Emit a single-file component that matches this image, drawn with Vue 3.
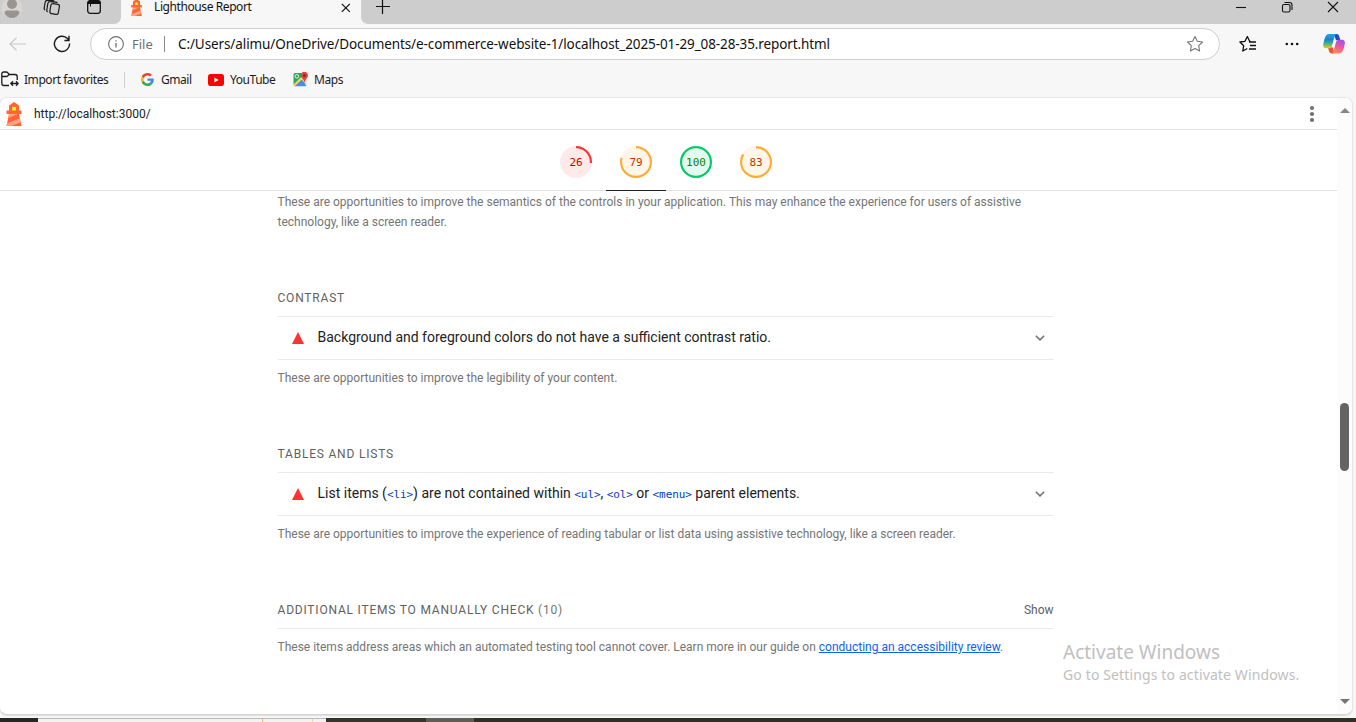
<script setup>
const scores = [
  { value: 26, kind: 'fail' },
  { value: 79, kind: 'average', active: true },
  { value: 100, kind: 'pass' },
  { value: 83, kind: 'average' },
]
const circumference = 2 * Math.PI * 56
const dash = (v) => `${(v / 100) * circumference} ${circumference}`
</script>

<template>
  <div class="browser">
    <div class="tabstrip">
      <div class="tab-left">
        <svg class="avatar" width="22" height="24" viewBox="0 0 22 24">
          <circle cx="12" cy="8" r="10.5" fill="#d8d6d3" />
          <circle cx="12" cy="4" r="5" fill="#989490" />
          <path d="M4.500 13q0-2.500 2.500-2.500h10q2.500 0 2.500 2.500-2 5-7.500 5t-7.500-5z" fill="#989490" />
        </svg>
        <svg class="stack" width="18" height="18" viewBox="0 0 18 18" fill="none" stroke="#1b1b1b" stroke-width="1.200">
          <rect x="7.300" y="4.800" width="8.600" height="10.200" rx="2" transform="rotate(10 11 10)" />
          <path d="M4.600 13q-1-.5-.8-1.900l1-6.500q.4-2 2.400-1.900l5.500.4q1.200.1 1.600.9M2.100 11q-1.100-.7-.9-2l.9-5.500q.4-2.300 2.400-2.200l5.300.3q1 .1 1.500.9" />
        </svg>
        <svg class="workspace" width="16" height="16" viewBox="0 0 16 16">
          <rect x="1.700" y="1.700" width="12.600" height="12.600" rx="2.500" fill="none" stroke="#111" stroke-width="1.300" />
          <path d="M1.500 5V3.500q0-2 2-2h9q2 0 2 2V5z" fill="#111" />
          <path d="M4.500 5v2.500" stroke="#111" />
        </svg>
      </div>
      <div class="tab">
        <svg class="favicon" width="17" height="17" viewBox="0 0 48 48">
          <path d="m14 7 10-7 10 7v10h5v7h-5l5 24H9l5-24H9v-7h5V7Z" fill="#F63" />
          <path d="M31.561 24H14l-1.689 8.105L31.561 24ZM18.983 48H9l1.022-4.907L35.723 32.270l1.663 7.980L18.983 48Z" fill="#FFA385" />
          <path d="M20.500 10h7v7h-7z" fill="#FF3" />
        </svg>
        <span class="tab-title">Lighthouse Report</span>
        <svg class="tab-close" width="10" height="10" viewBox="0 0 10 10" stroke="#111" stroke-width="1.200"><path d="m.8.800 8 8M8.800.800l-8 8" /></svg>
      </div>
      <div class="tab-right">
        <svg class="plus" width="14" height="14" viewBox="0 0 14 14" stroke="#111" stroke-width="1.200"><path d="M6.500 0v14M0 6.500h14" /></svg>
        <svg class="winctl" width="104" height="14" viewBox="0 0 104 14" fill="none" stroke="#111" stroke-width="1.100">
          <path d="M0 7.500h10" />
          <rect x="46.500" y="4.500" width="7.500" height="7.500" rx="1.500" />
          <path d="M48.500 2.500h5q2.500 0 2.500 2.500v5" />
          <path d="m92 2 10 10M102 2 92 12" />
        </svg>
      </div>
    </div>

    <div class="toolbar">
      <svg class="back" width="17" height="14" viewBox="0 0 17 14" fill="none" stroke="#c9c9c9" stroke-width="1.200"><path d="M17 7H1M7.500.7 1 7l6.500 6.300" /></svg>
      <svg class="reload" width="18" height="18" viewBox="0 0 18 18" fill="none" stroke="#1b1b1b" stroke-width="1.400"><path d="M16.600 8.500A7.600 7.600 0 1 1 14.500 3.600L16 5.200M16 .8v4.700h-4.600" /></svg>
      <div class="address">
        <svg class="info" width="16" height="16" viewBox="0 0 16 16" fill="none" stroke="#707070" stroke-width="1.100"><circle cx="8" cy="8" r="7.400" /><path d="M8 7v4.500M8 4.200v1.400" stroke-width="1.300" /></svg>
        <span class="scheme">File</span>
        <span class="sep"></span>
        <span class="url">C:/Users/alimu/OneDrive/Documents/e-commerce-website-1/localhost_2025-01-29_08-28-35.report.html</span>
        <svg class="star" width="18" height="18" viewBox="0 0 18 18" fill="none" stroke="#767676" stroke-width="1.100" stroke-linejoin="round"><path d="m9 1.500 2.300 4.800 5.200.7-3.800 3.700.9 5.300L9 13.500 4.400 16l.9-5.300L1.500 7l5.200-.7z" /></svg>
      </div>
      <svg class="favs" width="18" height="18" viewBox="0 0 18 18" fill="none" stroke="#111" stroke-width="1.300" stroke-linejoin="round"><path d="M11.500 6.500 10.600 6.300 8.300 1.500 6 6.300.9 7l3.800 3.700-.9 5.300 4.500-2.500M10 7h7M11 10.500h6M10 14h7" /></svg>
      <svg class="more" width="14" height="4" viewBox="0 0 14 4" fill="#111"><circle cx="1.800" cy="2" r="1.300" /><circle cx="7" cy="2" r="1.300" /><circle cx="12.200" cy="2" r="1.300" /></svg>
      <svg class="copilot" width="22" height="20" viewBox="0 0 23 21">
        <defs>
          <linearGradient id="cpa" x1="0" y1="0" x2="0" y2="1"><stop offset="0" stop-color="#1aa9ee" /><stop offset=".4" stop-color="#1780d8" /><stop offset=".7" stop-color="#4dba74" /><stop offset="1" stop-color="#f3c91d" /></linearGradient>
          <linearGradient id="cpb" x1=".6" y1="0" x2=".3" y2="1"><stop offset="0" stop-color="#a64df0" /><stop offset=".5" stop-color="#f0569a" /><stop offset="1" stop-color="#ff9651" /></linearGradient>
        </defs>
        <path d="M11 0h3.500q1.800 0 2.400 2l1.300 4.500h-4.500z" fill="#1b4fc9" />
        <path d="M12 20.500H9q-2 0-2.600-2L5 14h5z" fill="#f0523d" />
        <path d="M6.500 0H14q-1.500.5-2 2.500L9.500 12Q8.800 15 6 15H3q-3.300 0-2.800-4.200Q.8 6.500 2.500 2.500 3.600 0 6.500 0z" fill="url(#cpa)" />
        <path d="M16.500 20.500H9q1.500-.5 2-2.500L13.500 9q.8-3 3.500-3h3q3.300 0 2.800 4.200-.5 4-2.300 7.800-1.100 2.500-4 2.500z" fill="url(#cpb)" />
      </svg>
    </div>

    <div class="favorites">
      <svg class="import" width="18" height="17" viewBox="0 0 18 17" fill="none" stroke="#1b1b1b" stroke-width="1.300"><path d="M8 14.500H3q-2.200 0-2.200-2.200V3Q.8 1 3 1h2.200q.9 0 1.500.7L8.500 3.500H14q2.200 0 2.200 2.200V9M1 5.500h4.200q1 0 1.600-.7L8.300 3.500M10 12.500h7M12 10.300l-2.200 2.200 2.200 2.200M15 10.300l2.200 2.200-2.200 2.200" /></svg>
      <span class="fav-import">Import favorites</span>
      <span class="fav-sep"></span>
      <svg class="google" width="13" height="13" viewBox="0 0 48 48">
        <path fill="#EA4335" d="M24 9.500c3.540 0 6.710 1.220 9.210 3.600l6.850-6.850C35.900 2.380 30.470 0 24 0 14.620 0 6.510 5.380 2.560 13.220l7.980 6.190C12.430 13.720 17.740 9.500 24 9.500z" />
        <path fill="#4285F4" d="M46.980 24.550c0-1.570-.15-3.090-.38-4.550H24v9.020h12.940c-.58 2.960-2.260 5.480-4.780 7.180l7.730 6c4.510-4.180 7.090-10.360 7.090-17.650z" />
        <path fill="#FBBC05" d="M10.530 28.590a14.500 14.500 0 0 1 0-9.180l-7.980-6.190a24 24 0 0 0 0 21.560z" />
        <path fill="#34A853" d="M24 48c6.480 0 11.930-2.130 15.890-5.810l-7.730-6c-2.150 1.450-4.920 2.300-8.160 2.300-6.260 0-11.570-4.220-13.470-9.910l-7.980 6.190C6.510 42.620 14.620 48 24 48z" />
      </svg>
      <span class="fav-gmail">Gmail</span>
      <svg class="youtube" width="16" height="12" viewBox="0 0 16 12"><rect width="16" height="12" rx="2.800" fill="#f00" /><path d="m6.300 3.500 4.400 2.500-4.400 2.500z" fill="#fff" /></svg>
      <span class="fav-youtube">YouTube</span>
      <svg class="maps" width="15" height="15" viewBox="0 0 15 15">
        <path d="M2 1h10v12.500H2Q.5 13.500.5 12V2.500Q.5 1 2 1z" fill="#2da562" />
        <path d="M1 13.500 7 7l6.500 6.500q-.5.800-1.500.8H2q-.7 0-1-.8z" fill="#4a8af4" />
        <path d="m.5 12.500 9-9 1.500 2-9.500 9z" fill="#f5d34c" />
        <path d="m8 7 5.500-1v7z" fill="#d9dce0" />
        <circle cx="3.800" cy="4.300" r="1.800" fill="none" stroke="#e7f5ec" />
        <path d="M11.500 10.500Q10.800 7.500 9 6 7.600 4.800 7.800 3.400A3.600 3.600 0 0 1 15 3.400Q15 5 13.700 6.200 12 8 11.500 10.500z" fill="#e24638" />
        <circle cx="11.400" cy="3.600" r="1.300" fill="#7a1f1b" />
      </svg>
      <span class="fav-maps">Maps</span>
    </div>

    <div class="page">
      <div class="report">
        <header class="topbar">
          <svg width="24" height="24" viewBox="0 0 48 48">
            <path d="m14 7 10-7 10 7v10h5v7h-5l5 24H9l5-24H9v-7h5V7Z" fill="#F63" />
            <path d="M31.561 24H14l-1.689 8.105L31.561 24ZM18.983 48H9l1.022-4.907L35.723 32.270l1.663 7.980L18.983 48Z" fill="#FFA385" />
            <path d="M20.500 10h7v7h-7z" fill="#FF3" />
          </svg>
          <span class="site">http://localhost:3000/</span>
          <svg class="kebab" width="6" height="18" viewBox="0 0 6 18" fill="#707070"><circle cx="3" cy="3" r="2.100" /><circle cx="3" cy="9" r="2.100" /><circle cx="3" cy="15" r="2.100" /></svg>
        </header>
        <nav class="scores">
          <div v-for="(s, i) in scores" :key="i" class="score" :class="[s.kind, { active: s.active }]">
            <div class="gauge">
              <svg width="32" height="32" viewBox="0 0 120 120">
                <circle class="disc" cx="60" cy="60" r="60" />
                <circle class="arc" cx="60" cy="60" r="56" :stroke-dasharray="dash(s.value)" transform="rotate(-90 60 60)" />
              </svg>
              <span class="num">{{ s.value }}</span>
            </div>
          </div>
        </nav>
        <main class="body">
          <p class="desc first">These are opportunities to improve the semantics of the controls in your application. This may enhance the experience for users of assistive<br />technology, like a screen reader.</p>

          <section class="group">
            <h3 class="heading"><span>CONTRAST</span></h3>
            <div class="audit">
              <i class="tri"></i>
              <span class="title">Background and foreground colors do not have a sufficient contrast ratio.</span>
              <svg class="chev" width="10" height="6" viewBox="0 0 10 6" fill="none" stroke="#757575" stroke-width="1.600"><path d="m.8.7 4.200 4.200L9.200.7" /></svg>
            </div>
            <p class="desc">These are opportunities to improve the legibility of your content.</p>
          </section>

          <section class="group">
            <h3 class="heading"><span>TABLES AND LISTS</span></h3>
            <div class="audit">
              <i class="tri"></i>
              <span class="title">List items (<code>&lt;li&gt;</code>) are not contained within <code>&lt;ul&gt;</code>, <code>&lt;ol&gt;</code> or <code>&lt;menu&gt;</code> parent elements.</span>
              <svg class="chev" width="10" height="6" viewBox="0 0 10 6" fill="none" stroke="#757575" stroke-width="1.600"><path d="m.8.7 4.200 4.200L9.200.7" /></svg>
            </div>
            <p class="desc">These are opportunities to improve the experience of reading tabular or list data using assistive technology, like a screen reader.</p>
          </section>

          <section class="group">
            <h3 class="heading"><span>ADDITIONAL ITEMS TO MANUALLY CHECK <em>(10)</em></span><span class="show">Show</span></h3>
            <p class="desc">These items address areas which an automated testing tool cannot cover. Learn more in our guide on <a>conducting an accessibility review</a>.</p>
          </section>
        </main>
      </div>
      <div class="scrollbar">
        <i class="up"></i>
        <i class="thumb"></i>
        <i class="down"></i>
      </div>
    </div>

    <div class="taskbar">
      <span class="tk-a"></span><span class="tk-b"><i></i><i></i></span><span class="tk-c"></span><span class="tk-d"></span><span class="tk-e"></span>
    </div>

    <div class="watermark">
      <div class="w1">Activate Windows</div>
      <div class="w2">Go to Settings to activate Windows.</div>
    </div>
  </div>
</template>

<style>
html, body { margin: 0; overflow: hidden; }
</style>

<style scoped>
* { box-sizing: border-box; }
svg { display: block; flex: none; }
.browser { position: relative; width: 1356px; height: 722px; overflow: hidden; display: flex; flex-direction: column; background: #f7f7f7; font-family: "Noto Sans", "Open Sans", sans-serif; color: #1b1b1b; white-space: nowrap; }

.tabstrip { height: 24px; display: flex; align-items: flex-start; background: #f7f7f7; flex: none; }
.tab-left { width: 121px; height: 24px; background: #cdcdcd; border-bottom-right-radius: 7px; display: flex; }
.stack { margin: -1px 0 0 21px; }
.workspace { margin: -1px 0 0 25px; }
.tab { width: 240px; display: flex; align-items: flex-start; }
.favicon { margin: -1px 0 0 7px; }
.tab-title { margin-left: 9px; width: 104px; font-size: 12px; line-height: 14px; letter-spacing: -0.41px; color: #111; }
.tab-close { margin: 3px 0 0 83px; }
.tab-right { flex: 1; height: 24px; background: #cdcdcd; border-bottom-left-radius: 7px; display: flex; }
.plus { margin-left: 15px; }
.winctl { margin-left: auto; margin-right: 16px; }

.toolbar { height: 40px; display: flex; align-items: center; flex: none; }
.back { margin-left: 9px; }
.reload { margin-left: 27px; }
.address { margin-left: 19px; width: 1130px; height: 32px; border: 1px solid #cfcfcf; border-radius: 16px; background: #fff; display: flex; align-items: center; font-size: 13px; }
.info { margin-left: 17px; }
.scheme { margin-left: 8px; width: 24px; color: #707070; }
.sep { width: 1px; height: 16px; background: #8a8a8a; margin-left: 8px; }
.url { margin-left: 13px; width: 1008px; color: #111; font-size: 13.5px; letter-spacing: -0.1px; }
.star { margin-right: 15px; }
.favs { margin-left: 19px; }
.more { margin-left: 28px; }
.copilot { margin-left: 24px; }

.favorites { height: 33px; display: flex; align-items: center; flex: none; font-size: 12px; letter-spacing: -0.45px; padding-bottom: 2px; }
.import { margin-left: 1px; }
.fav-import { margin-left: 5px; width: 85px; }
.fav-sep { width: 1px; height: 16px; margin-left: 15px; background: #cfcfcf; }
.google { margin-left: 16px; }
.fav-gmail { margin-left: 7px; width: 31px; }
.youtube { margin-left: 16px; }
.fav-youtube { margin-left: 6px; width: 47px; }
.maps { margin-left: 16px; }
.fav-maps { margin-left: 6px; letter-spacing: -0.4px; }

.page { height: 618px; width: 1354px; margin-left: -1px; border: 1px solid #e6e6e6; border-bottom-color: #d4d4d4; border-radius: 8px; background: #fff; display: flex; overflow: hidden; flex: none; box-shadow: 0 1px 1px #ddd; }
.report { width: 1337px; flex: none; font-family: Roboto, sans-serif; }
.topbar { height: 32px; border-bottom: 1px solid #e0e0e0; display: flex; align-items: center; padding: 0 22px 0 2px; }
.site { margin-left: 8px; font-size: 12px; color: #212121; }
.kebab { margin-left: auto; }
.scores { height: 61px; border-bottom: 1px solid #e0e0e0; display: flex; padding-left: 546px; }
.score { width: 60px; height: 61px; padding: 16px 14px 0; }
.score.active { border-bottom: 1px solid #212121; }
.gauge { position: relative; width: 32px; height: 32px; }
.num { position: absolute; inset: 0; text-align: center; line-height: 34px; font-family: "DejaVu Sans Mono", monospace; font-size: 11px; }
.disc { opacity: .1; }
.arc { fill: none; stroke-width: 8; }
.fail .disc { fill: #f33; } .fail .arc { stroke: #f33; } .fail .num { color: #c00; }
.average .disc { fill: #fa3; } .average .arc { stroke: #fa3; } .average .num { color: #c33300; }
.pass .disc { fill: #0c6; } .pass .arc { stroke: #0c6; } .pass .num { color: #080; }

.body { width: 776px; margin-left: 277.5px; padding-top: 1px; }
.desc { margin: 8px 0 0; font-size: 12px; line-height: 20px; color: #757575; }
.desc.first { margin: 0; }
.group { margin-top: 56px; }
.heading { margin: 0; height: 29px; border-bottom: 1px solid #ebebeb; font-size: 12px; font-weight: 400; line-height: 20px; color: #616161; letter-spacing: 0.8px; display: flex; justify-content: space-between; }
.heading em { font-style: normal; color: #757575; }
.show { letter-spacing: 0; }
.audit { height: 43px; border-bottom: 1px solid #ebebeb; display: flex; align-items: center; padding: 0 9px 0 14px; }
.tri { width: 0; height: 0; border: 6px solid transparent; border-top: 0; border-bottom: 12px solid #f33; }
.title { margin-left: 14px; font-size: 14px; line-height: 20px; height: 20px; color: #212121; margin-top: -2px; }
.chev { margin-left: auto; }
code { font-family: "DejaVu Sans Mono", monospace; font-size: 11px; line-height: 1; letter-spacing: -0.08px; color: #0938c2; }
a { color: #0c64ed; text-decoration: underline; }

.scrollbar { width: 15px; background: #fcfcfc; display: flex; flex-direction: column; align-items: center; }
.up { border: 5px solid transparent; border-top: 0; border-bottom: 5px solid #858585; margin-top: 10px; }
.thumb { width: 9px; height: 68px; border-radius: 5px; background: #636363; margin-top: 290px; }
.down { border: 5px solid transparent; border-bottom: 0; border-top: 5px solid #757575; margin-top: 228px; }

.taskbar { height: 4px; margin-top: auto; display: flex; flex: none; }
.tk-a { width: 38px; background: #262626; }
.tk-b { width: 288px; background: #f3f2f2; border-top: 1px solid #b9b9b9; display: flex; }
.tk-b i { width: 1px; background: #edbd62; margin-left: 224px; }
.tk-b i + i { margin-left: 49px; background: #efd5a8; }
.tk-c { width: 100px; background: #35342a; }
.tk-d { width: 48px; background: #5e5d56; }
.tk-e { flex: 1; background: #302f26; }

.watermark { position: absolute; left: 1063px; top: 640px; color: #c0c0c0; }
.w1 { font-size: 19px; line-height: 24px; }
.w2 { font-size: 14px; line-height: 20px; margin-top: 1px; letter-spacing: 0.13px; }
</style>
